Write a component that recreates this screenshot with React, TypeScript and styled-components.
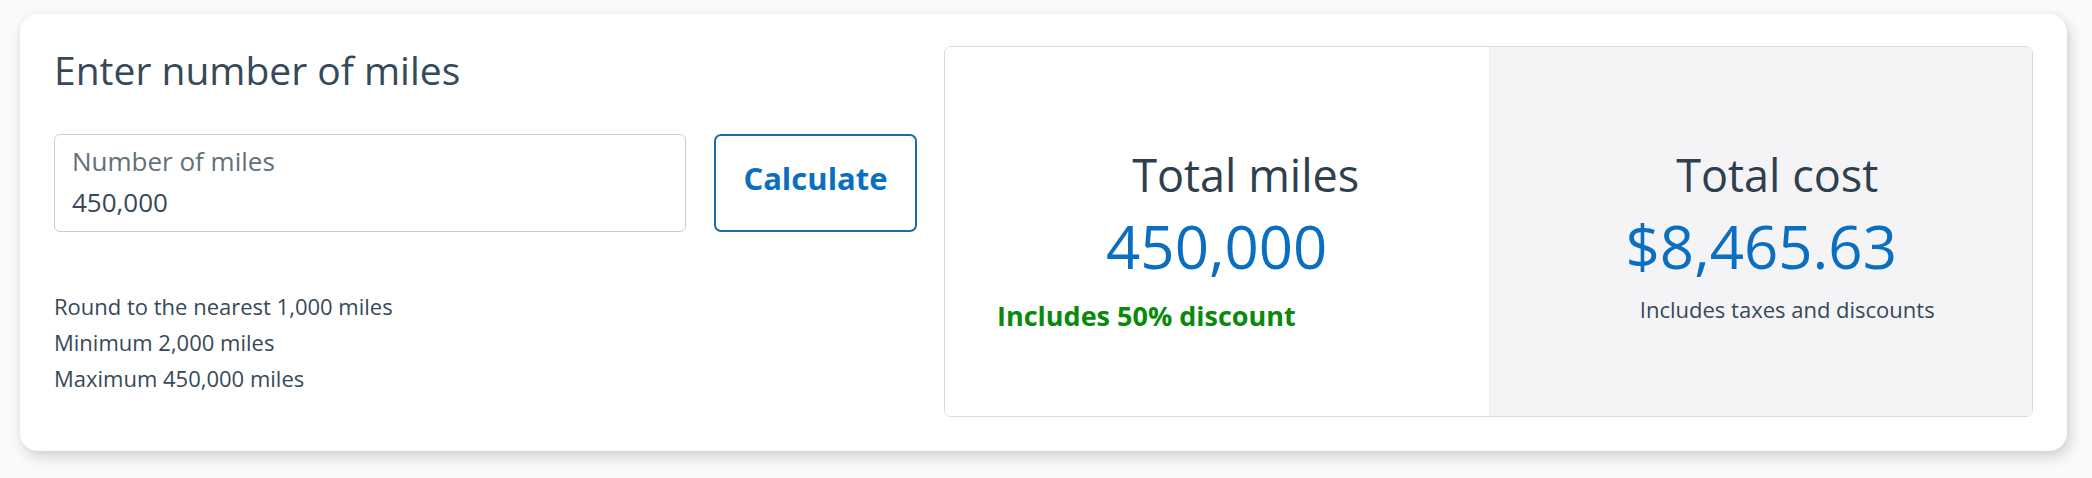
import React, { useState } from 'react'
import styled, { createGlobalStyle } from 'styled-components'

const TEXT = '#36495a'
const BLUE = '#0b6fc1'

const GlobalStyle = createGlobalStyle`
  html, body {
    margin: 0;
    padding: 0;
    background: #fafafa;
  }
  body {
    font-family: 'Open Sans', 'Noto Sans', sans-serif;
    color: ${TEXT};
  }
  * {
    box-sizing: border-box;
  }
`

const Page = styled.div`
  padding: 14px 25px 27px 20px;
`

const Card = styled.section`
  display: flex;
  gap: 27px;
  height: 437px;
  padding: 32px 34px 34px;
  background: #fff;
  border-radius: 18px;
  box-shadow: 3px 6px 14px rgba(0, 0, 0, 0.16), 0 0 6px rgba(0, 0, 0, 0.04);
`

const EntryColumn = styled.div`
  display: flex;
  flex-direction: column;
  width: 863px;
  flex-shrink: 0;
`

const Heading = styled.h2`
  margin: 0;
  font-size: 39px;
  line-height: 48px;
  font-weight: 400;
  color: ${TEXT};
`

const InputRow = styled.div`
  display: flex;
  gap: 28px;
  height: 98px;
  margin-top: 40px;
`

const Field = styled.label`
  display: flex;
  flex-direction: column;
  flex: 1;
  padding: 11px 17px 12px;
  border: 1px solid #c9cfd4;
  border-radius: 6px;
  background: #fff;
`

const FieldLabel = styled.span`
  font-size: 26px;
  line-height: 31px;
  color: #627079;
`

const FieldInput = styled.input`
  margin-top: 10px;
  padding: 0;
  height: 31px;
  border: 0;
  outline: none;
  background: transparent;
  font-family: inherit;
  font-size: 26px;
  line-height: 31px;
  color: ${TEXT};
`

const CalculateButton = styled.button`
  width: 203px;
  flex-shrink: 0;
  padding: 0 0 10px;
  border: 2px solid #1d6ba3;
  border-radius: 7px;
  background: #fff;
  font-family: inherit;
  font-size: 31px;
  font-weight: 700;
  color: ${BLUE};
  cursor: pointer;
`

const Hints = styled.ul`
  margin: 56px 0 0;
  padding: 0;
  list-style: none;
  li {
    font-size: 22px;
    line-height: 36px;
    color: ${TEXT};
  }
`

const ResultPanel = styled.div`
  display: grid;
  grid-template-columns: 1fr 1fr;
  flex: 1;
  border: 1px solid #d8dbde;
  border-radius: 7px;
  overflow: hidden;
`

const ResultHalf = styled.div<{ shaded?: boolean }>`
  display: flex;
  flex-direction: column;
  align-items: center;
  padding-top: 101px;
  background: ${({ shaded }) => (shaded ? '#f4f4f6' : '#fff')};
  border-left: ${({ shaded }) => (shaded ? '2px solid #efeff2' : '0')};
`

const ResultTitle = styled.div<{ shift: number }>`
  padding-left: ${({ shift }) => shift * 2}px;
  font-size: 45px;
  line-height: 54px;
  color: #2f3f4d;
`

const ResultValue = styled.div`
  margin-top: 12px;
  font-size: 60px;
  line-height: 64px;
  color: ${BLUE};
`

const Discount = styled.div`
  align-self: flex-start;
  margin: 21px 0 0 52px;
  font-size: 27px;
  line-height: 34px;
  font-weight: 700;
  color: #0a8a0a;
`

const Note = styled.div`
  margin-top: 16px;
  padding-left: 52px;
  font-size: 22px;
  line-height: 30px;
  color: ${TEXT};
`

export default function App() {
  const [miles, setMiles] = useState('450,000')

  return (
    <>
      <GlobalStyle />
      <Page>
        <Card>
          <EntryColumn>
            <Heading>Enter number of miles</Heading>
            <InputRow>
              <Field>
                <FieldLabel>Number of miles</FieldLabel>
                <FieldInput value={miles} onChange={(e) => setMiles(e.target.value)} />
              </Field>
              <CalculateButton type="button">Calculate</CalculateButton>
            </InputRow>
            <Hints>
              <li>Round to the nearest 1,000 miles</li>
              <li>Minimum 2,000 miles</li>
              <li>Maximum 450,000 miles</li>
            </Hints>
          </EntryColumn>
          <ResultPanel>
            <ResultHalf>
              <ResultTitle shift={29}>Total miles</ResultTitle>
              <ResultValue>{miles}</ResultValue>
              <Discount>Includes 50% discount</Discount>
            </ResultHalf>
            <ResultHalf shaded>
              <ResultTitle shift={16}>Total cost</ResultTitle>
              <ResultValue>$8,465.63</ResultValue>
              <Note>Includes taxes and discounts</Note>
            </ResultHalf>
          </ResultPanel>
        </Card>
      </Page>
    </>
  )
}
